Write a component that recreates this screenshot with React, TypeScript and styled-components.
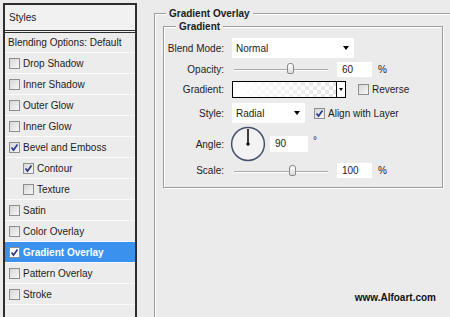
import React from "react";
import styled, { createGlobalStyle } from "styled-components";

const GlobalStyle = createGlobalStyle`
  html, body {
    margin: 0;
    padding: 0;
  }
  body {
    background: #ebebeb;
    font-family: "Liberation Sans", Arial, sans-serif;
    font-size: 10px;
    color: #1c1c1c;
    overflow: hidden;
  }
`;

const Page = styled.div`
  display: flex;
  align-items: flex-start;
  width: 450px;
  height: 317px;
  overflow: hidden;
`;

/* ---------- left: styles list ---------- */

const StylesPanel = styled.div`
  flex: none;
  width: 134px;
  height: 330px;
  margin: 3px 0 0 3px;
  border: 2px solid #2e2e2e;
  box-sizing: border-box;
  background: #ececec;
`;

const PanelHeader = styled.div`
  height: 25px;
  display: flex;
  align-items: center;
  padding-left: 4px;
  border-bottom: 3px double #2e2e2e;
  background: #f1f1f1;
`;

const BlendingRow = styled.div`
  height: 19px;
  display: flex;
  align-items: center;
  padding-left: 3px;
  border-bottom: 1px solid #fafafa;
`;

const StyleRow = styled.div<{ $indent?: boolean; $selected?: boolean }>`
  height: 20px;
  display: flex;
  align-items: center;
  gap: 3px;
  padding-left: ${(p) => (p.$indent ? 18 : 4)}px;
  border-bottom: 1px solid #fafafa;
  background: ${(p) => (p.$selected ? "#3a92ee" : "transparent")};
  color: ${(p) => (p.$selected ? "#fff" : "#1c1c1c")};
  font-weight: ${(p) => (p.$selected ? "bold" : "normal")};
`;

const Box = styled.span<{ $white?: boolean }>`
  flex: none;
  width: 11px;
  height: 11px;
  box-sizing: border-box;
  border: 1px solid #8e8e8e;
  background: ${(p) =>
    p.$white ? "#fff" : "linear-gradient(135deg, #d6d6d6, #f7f7f7)"};
  display: flex;
  align-items: center;
  justify-content: center;
`;

const Check = ({ checked, white }: { checked?: boolean; white?: boolean }) => (
  <Box $white={white}>
    {checked && (
      <svg width="9" height="9" viewBox="0 0 9 9">
        <polyline
          points="1.5,4.5 3.5,7 7.5,1.5"
          fill="none"
          stroke="#2b3a8e"
          strokeWidth="1.7"
        />
      </svg>
    )}
  </Box>
);

/* ---------- right: gradient overlay ---------- */

const Main = styled.div`
  flex: none;
  margin-left: 17px;
  padding-top: 7px;
`;

const OuterSet = styled.fieldset`
  margin: 0;
  padding: 0 0 0 8px;
  width: 310px;
  height: 330px;
  min-width: 0;
  box-sizing: border-box;
  border: 1px solid #9d9d9d;
  box-shadow: inset 1px 1px 0 #fff, 1px 1px 0 #fff;
`;

const Legend = styled.legend<{ $offset: number }>`
  margin-left: ${(p) => p.$offset}px;
  padding: 0 3px;
  font-weight: bold;
  line-height: 13px;
  background: #ebebeb;
`;

const InnerSet = styled.fieldset`
  margin: 0;
  padding: 5px 0 8px 0;
  width: 280px;
  min-width: 0;
  box-sizing: border-box;
  border: 1px solid #9d9d9d;
  box-shadow: inset 1px 1px 0 #fff, 1px 1px 0 #fff;
  display: flex;
  flex-direction: column;
`;

const Row = styled.div<{ $h: number; $mt?: number }>`
  display: grid;
  grid-template-columns: 60px 1fr;
  column-gap: 8px;
  align-items: center;
  height: ${(p) => p.$h}px;
  margin-top: ${(p) => p.$mt ?? 0}px;
`;

const Label = styled.span`
  text-align: right;
  color: #222;
`;

const Controls = styled.div`
  display: flex;
  align-items: center;
`;

const Select = styled.div<{ $w: number }>`
  width: ${(p) => p.$w}px;
  height: 20px;
  box-sizing: border-box;
  background: #fff;
  display: flex;
  align-items: center;
  justify-content: space-between;
  padding: 0 5px 0 4px;

  &::after {
    content: "";
    border-left: 3.5px solid transparent;
    border-right: 3.5px solid transparent;
    border-top: 4px solid #000;
  }
`;

const Slider = styled.div`
  position: relative;
  width: 96px;
  height: 14px;

  &::before {
    content: "";
    position: absolute;
    left: 2px;
    right: 0;
    top: 7px;
    height: 1px;
    background: #aaaaaa;
    box-shadow: 0 1px 0 #fff;
  }
`;

const Thumb = styled.span`
  position: absolute;
  top: 1px;
  width: 7px;
  height: 11px;
  box-sizing: border-box;
  border: 1px solid #8a8a8a;
  border-radius: 3px 3px 2px 2px;
  background: linear-gradient(#ffffff, #dcdcdc);
`;

const NumBox = styled.div<{ $w: number; $h: number; $ml: number }>`
  width: ${(p) => p.$w}px;
  height: ${(p) => p.$h}px;
  line-height: ${(p) => p.$h}px;
  margin-left: ${(p) => p.$ml}px;
  box-sizing: border-box;
  padding-left: 5px;
  background: #fff;
`;

const Unit = styled.span<{ $ml: number; $up?: boolean }>`
  margin-left: ${(p) => p.$ml}px;
  align-self: ${(p) => (p.$up ? "flex-start" : "center")};
  margin-top: ${(p) => (p.$up ? 9 : 0)}px;
`;

const GradientSwatch = styled.div`
  width: 114px;
  height: 17px;
  box-sizing: border-box;
  border: 1px solid #000;
  display: flex;
`;

const SwatchFill = styled.div`
  flex: 1;
  background: linear-gradient(to right, #fff 0%, rgba(255, 255, 255, 0) 100%),
    repeating-conic-gradient(#e4e4e4 0% 25%, #ffffff 0% 50%) 0 0 / 8px 8px;
`;

const SwatchArrow = styled.div`
  width: 8px;
  border-left: 1px solid #000;
  background: #fff;
  display: flex;
  align-items: center;
  justify-content: center;

  &::after {
    content: "";
    border-left: 2.5px solid transparent;
    border-right: 2.5px solid transparent;
    border-top: 3px solid #000;
  }
`;

const CheckLabel = styled.label<{ $ml: number }>`
  display: flex;
  align-items: center;
  gap: 3px;
  margin-left: ${(p) => p.$ml}px;
`;

const Dial = styled.svg`
  margin-left: -2px;
`;

const Watermark = styled.div`
  width: 280px;
  margin-top: 104px;
  padding-right: 7px;
  box-sizing: border-box;
  text-align: right;
  font-weight: bold;
  line-height: 12px;
  color: #111;
`;

const styleItems: { name: string; checked?: boolean; indent?: boolean; selected?: boolean }[] = [
  { name: "Drop Shadow" },
  { name: "Inner Shadow" },
  { name: "Outer Glow" },
  { name: "Inner Glow" },
  { name: "Bevel and Emboss", checked: true },
  { name: "Contour", checked: true, indent: true },
  { name: "Texture", indent: true },
  { name: "Satin" },
  { name: "Color Overlay" },
  { name: "Gradient Overlay", checked: true, selected: true },
  { name: "Pattern Overlay" },
  { name: "Stroke" },
];

export default function App() {
  return (
    <>
      <GlobalStyle />
      <Page>
        <StylesPanel>
          <PanelHeader>Styles</PanelHeader>
          <BlendingRow>Blending Options: Default</BlendingRow>
          {styleItems.map((s) => (
            <StyleRow key={s.name} $indent={s.indent} $selected={s.selected}>
              <Check checked={s.checked} white={s.selected} />
              {s.name}
            </StyleRow>
          ))}
          <StyleRow />
        </StylesPanel>

        <Main>
          <OuterSet>
            <Legend $offset={3}>Gradient Overlay</Legend>
            <InnerSet>
              <Legend $offset={12}>Gradient</Legend>

              <Row $h={20}>
                <Label>Blend Mode:</Label>
                <Controls>
                  <Select $w={122}>Normal</Select>
                </Controls>
              </Row>

              <Row $h={18} $mt={2}>
                <Label>Opacity:</Label>
                <Controls>
                  <Slider>
                    <Thumb style={{ left: 55 }} />
                  </Slider>
                  <NumBox $w={35} $h={15} $ml={9}>60</NumBox>
                  <Unit $ml={6}>%</Unit>
                </Controls>
              </Row>

              <Row $h={18} $mt={2}>
                <Label>Gradient:</Label>
                <Controls>
                  <GradientSwatch>
                    <SwatchFill />
                    <SwatchArrow />
                  </GradientSwatch>
                  <CheckLabel $ml={12}>
                    <Check />
                    Reverse
                  </CheckLabel>
                </Controls>
              </Row>

              <Row $h={20} $mt={5}>
                <Label>Style:</Label>
                <Controls>
                  <Select $w={73}>Radial</Select>
                  <CheckLabel $ml={9}>
                    <Check checked />
                    Align with Layer
                  </CheckLabel>
                </Controls>
              </Row>

              <Row $h={36} $mt={3}>
                <Label>Angle:</Label>
                <Controls>
                  <Dial width="36" height="36" viewBox="0 0 36 36">
                    <circle cx="18" cy="18" r="16.4" fill="#f3f3f3" stroke="#46536e" strokeWidth="1.5" />
                    <line x1="18" y1="18" x2="18" y2="3" stroke="#111" strokeWidth="1.6" />
                    <circle cx="18" cy="18" r="1.7" fill="#111" />
                  </Dial>
                  <NumBox $w={38} $h={16} $ml={4}>90</NumBox>
                  <Unit $ml={5} $up>°</Unit>
                </Controls>
              </Row>

              <Row $h={17}>
                <Label>Scale:</Label>
                <Controls>
                  <Slider>
                    <Thumb style={{ left: 57 }} />
                  </Slider>
                  <NumBox $w={35} $h={15} $ml={9}>100</NumBox>
                  <Unit $ml={6}>%</Unit>
                </Controls>
              </Row>
            </InnerSet>
            <Watermark>www.Alfoart.com</Watermark>
          </OuterSet>
        </Main>
      </Page>
    </>
  );
}
